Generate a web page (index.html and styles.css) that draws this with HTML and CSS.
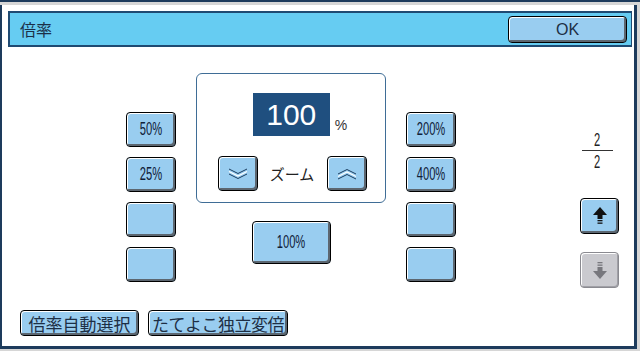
FILE: index.html
```html
<!DOCTYPE html>
<html>
<head>
    <meta charset="UTF-8">
    <title>倍率</title>
    <!-- Styling for the copier panel -->
    <link rel="stylesheet" href="styles.css">
</head>
<body>
<div class="screen">
    <div class="panel">
        <div class="titlebar">
            <span class="title">倍率</span>
            <button type="button" class="btn btn-ok">OK</button>
        </div>

        <div class="main">
            <!-- preset ratios, left -->
            <div class="col col-presets">
                <button type="button" class="btn btn-ratio"><span class="narrow">50%</span></button>
                <button type="button" class="btn btn-ratio"><span class="narrow">25%</span></button>
                <button type="button" class="btn btn-ratio"></button>
                <button type="button" class="btn btn-ratio"></button>
            </div>

            <!-- zoom box -->
            <div class="col col-zoom">
                <div class="zoombox">
                    <div class="readout">
                        <span class="value">100</span>
                        <span class="unit">%</span>
                    </div>
                    <div class="zoomrow">
                        <button type="button" class="btn btn-step">
                            <svg width="20" height="12" viewBox="0 0 20 12">
                                <polyline points="1,1 10,5.5 19,1" fill="none" stroke="#1b3c5e" stroke-width="1"/>
                                <polyline points="1,3.5 10,8 19,3.5" fill="none" stroke="#ffffff" stroke-width="1.2"/>
                                <polyline points="1,6 10,10.5 19,6" fill="none" stroke="#1b3c5e" stroke-width="1"/>
                            </svg>
                        </button>
                        <span class="zoomlabel">ズーム</span>
                        <button type="button" class="btn btn-step">
                            <svg width="20" height="12" viewBox="0 0 20 12">
                                <polyline points="1,6 10,1.5 19,6" fill="none" stroke="#1b3c5e" stroke-width="1"/>
                                <polyline points="1,8.5 10,4 19,8.5" fill="none" stroke="#ffffff" stroke-width="1.2"/>
                                <polyline points="1,11 10,6.5 19,11" fill="none" stroke="#1b3c5e" stroke-width="1"/>
                            </svg>
                        </button>
                    </div>
                </div>
                <button type="button" class="btn btn-100"><span class="narrow">100%</span></button>
            </div>

            <!-- preset ratios, right -->
            <div class="col col-presets">
                <button type="button" class="btn btn-ratio"><span class="narrow">200%</span></button>
                <button type="button" class="btn btn-ratio"><span class="narrow">400%</span></button>
                <button type="button" class="btn btn-ratio"></button>
                <button type="button" class="btn btn-ratio"></button>
            </div>

            <!-- page indicator and scroll -->
            <div class="col col-pages">
                <div class="fraction">
                    <span class="narrow">2</span>
                    <span class="bar"></span>
                    <span class="narrow">2</span>
                </div>
                <button type="button" class="btn btn-scroll">
                    <svg width="16" height="20" viewBox="0 0 16 20">
                        <polygon points="8,1 15,9 1,9" fill="#111"/>
                        <rect x="5.5" y="9" width="5" height="4" fill="#111"/>
                        <rect x="5.5" y="14" width="5" height="1.3" fill="#111"/>
                        <rect x="5.5" y="16.5" width="5" height="1.3" fill="#111"/>
                    </svg>
                </button>
                <button type="button" class="btn btn-scroll disabled">
                    <svg width="16" height="20" viewBox="0 0 16 20">
                        <rect x="5.5" y="2" width="5" height="1.3" fill="#77777d"/>
                        <rect x="5.5" y="4.5" width="5" height="1.3" fill="#77777d"/>
                        <rect x="5.5" y="7" width="5" height="4" fill="#77777d"/>
                        <polygon points="1,11 15,11 8,19" fill="#77777d"/>
                    </svg>
                </button>
            </div>
        </div>

        <div class="footer">
            <button type="button" class="btn btn-wide btn-auto">倍率自動選択</button>
            <button type="button" class="btn btn-wide btn-xy">たてよこ独立変倍</button>
        </div>
    </div>
</div>
</body>
</html>
```

FILE: styles.css
```css
body {
    margin: 0;
    background-color: #ffffff;
    font-family: "Liberation Sans", "Noto Sans CJK JP", sans-serif;
    color: #13304e;
}
.screen {
    width: 640px;
    height: 351px;
    box-sizing: border-box;
    border-top: 2px solid #1d3b5c;
    padding-top: 3px;
    background-color: #d6d6d6;
}
.panel {
    width: 637px;
    height: 344px;
    box-sizing: border-box;
    background-color: #ffffff;
    border-left: 2px solid #1d3b5c;
    border-right: 3px solid #1d3b5c;
    border-bottom: 3px solid #1d3b5c;
    display: flex;
    flex-direction: column;
}
.titlebar {
    margin: 6px 2px 0 6px;
    height: 36px;
    box-sizing: border-box;
    background-color: #66ccf2;
    border: 2px solid #1f4a72;
    border-right-width: 1px;
    display: flex;
    align-items: center;
    justify-content: space-between;
    padding: 0 4px 0 10px;
}
.title {
    font-size: 16px;
    color: #1b2f48;
}
.btn {
    box-sizing: border-box;
    background-color: #99cdf0;
    border: 1px solid #000;
    border-radius: 4px;
    box-shadow: inset 1px 1px 0 #ffffff, inset -2px -2px 0 #5c6670;
    color: #13304e;
    font-family: "Liberation Sans", "Noto Sans CJK JP", sans-serif;
    padding: 0;
    display: flex;
    align-items: center;
    justify-content: center;
}
.narrow {
    display: inline-block;
    font-family: "Liberation Sans", sans-serif;
    font-size: 18px;
    color: #0f2038;
    transform: scaleX(0.62);
}
.btn-ok {
    width: 119px;
    height: 27px;
    font-size: 16px;
    margin-top: 1px;
    font-weight: normal;
    color: #1d2f45;
}
.main {
    flex: 1;
    display: flex;
    align-items: flex-start;
    padding-left: 124px;
}
.col {
    display: flex;
    flex-direction: column;
}
.col-presets {
    margin-top: 65px;
    gap: 10px;
}
.btn-ratio {
    width: 50px;
    height: 35px;
}
.col-zoom {
    margin: 26px 20px 0 20px;
    width: 190px;
    align-items: center;
}
.zoombox {
    width: 190px;
    height: 130px;
    box-sizing: border-box;
    border: 1px solid #3f6d96;
    border-radius: 6px;
    display: flex;
    flex-direction: column;
    align-items: center;
    padding-top: 19px;
}
.readout {
    display: flex;
    align-items: flex-end;
    margin-left: 18px;
}
.value {
    width: 77px;
    height: 43px;
    background-color: #1f4f7f;
    color: #ffffff;
    font-size: 30px;
    display: flex;
    align-items: center;
    justify-content: center;
}
.unit {
    font-size: 14px;
    color: #333;
    margin: 0 0 3px 5px;
}
.zoomrow {
    display: flex;
    align-items: center;
    margin-top: 20px;
    margin-left: 2px;
}
.btn-step {
    width: 40px;
    height: 35px;
}
.zoomlabel {
    font-size: 15px;
    color: #222;
    width: 69px;
    text-align: center;
}
.btn-100 {
    margin-top: 18px;
    width: 79px;
    height: 43px;
}
.col-pages {
    margin: 84px 0 0 124px;
    align-items: center;
    width: 39px;
}
.fraction {
    display: flex;
    flex-direction: column;
    align-items: center;
    line-height: 18px;
    margin-left: -4px;
}
.fraction .narrow {
    color: #222;
}
.fraction .bar {
    width: 31px;
    height: 1px;
    background-color: #333;
    margin: 1px 0 2px;
}
.btn-scroll {
    width: 39px;
    height: 36px;
    margin-top: 27px;
}
.btn-scroll.disabled {
    margin-top: 18px;
    background-color: #cacacf;
    border-color: #8a8a90;
    box-shadow: inset 1px 1px 0 #ffffff, inset -1px -1px 0 #a0a0a6;
}
.footer {
    display: flex;
    gap: 9px;
    padding: 0 0 10px 18px;
}
.btn-wide {
    height: 26px;
    font-size: 17px;
    color: #1d2f45;
}
.btn-auto {
    width: 119px;
}
.btn-xy {
    width: 140px;
    letter-spacing: -0.5px;
}
```
